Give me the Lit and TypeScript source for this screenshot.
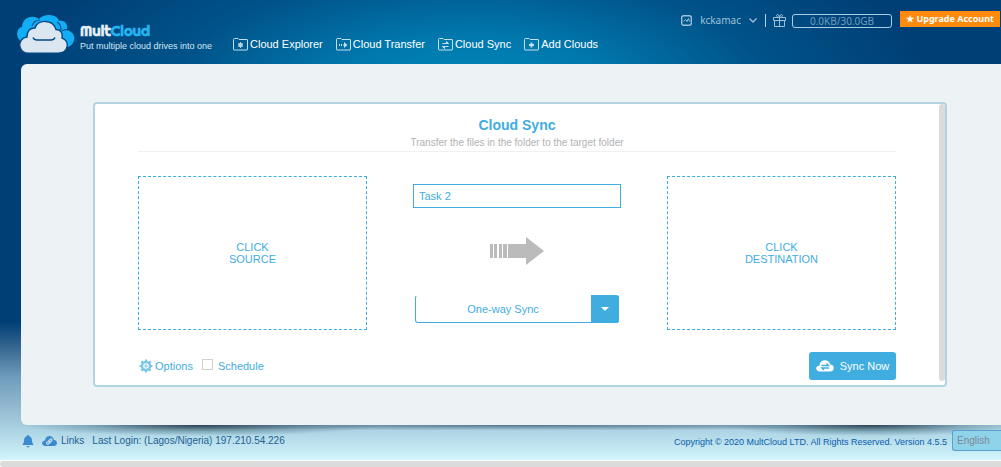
import { LitElement, html, css, svg } from "lit";
import { customElement, property, state } from "lit/decorators.js";

const glyphs: Record<string, unknown> = {
  explorer: svg`<circle cx="7.500" cy="7" r="1.800"/><path stroke-width=".8" d="M7.500 4v6M5 5.500l5 3M5 8.500l5-3"/>`,
  transfer: svg`<path d="M3.500 6v2M5.500 6v2M7 7h3"/><path stroke="none" d="M8 4 11.500 7 8 10z" fill="currentColor"/>`,
  sync: svg`<path d="M4.500 5.500h6M4.500 8.500h6"/><path d="M8.500 3.500 10.500 5.500H8.500zM6.500 10.500 4.500 8.500h2z" fill="currentColor"/>`,
  add: svg`<path d="M7.500 4.500v5M5 7h5" stroke-width="1.800"/>`,
};

@customElement("folder-link")
class FolderLink extends LitElement {
  @property() glyph = "add";
  @property() label = "";
  static styles = css`
    a { display: flex; align-items: center; gap: 2px; color: #fff; text-decoration: none; font-size: 11px; line-height: 14px; white-space: nowrap; }
    svg { width: 15px; height: 13px; color: #c4dfee; }
  `;
  render() {
    return html`<a href="#"><svg viewBox="0 0 15 13" fill="none" stroke="currentColor" stroke-width="1" aria-hidden="true">
      <path d="M.5 11.500V1.500Q.5.5 1.500.5H5L6 1.500h8q.5 0 .5.5v9.500q0 .5-.5.500H1q-.5 0-.5-.5z"/>${glyphs[this.glyph]}</svg>${this.label}</a>`;
  }
}

@customElement("app-root")
class AppRoot extends LitElement {
  @state() private task = "Task 2";

  static styles = css`
    :host { display: block; font-family: "Liberation Sans", Arial, sans-serif; font-size: 11px; color: #3faddf; }
    * { box-sizing: border-box; }
    .page { min-height: 100vh; display: flex; flex-direction: column; overflow: hidden;
      background: radial-gradient(ellipse 460px 180px at 47% 90px, #0088bb 0%, #0078ad 30%, rgba(0, 96, 150, .6) 65%, rgba(0, 63, 118, 0) 100%),
        linear-gradient(180deg, #003f76 0, #003f76 322px, #35668f 347px, #6f9cbd 377px, #92b9d0 407px, #a8d0e0 427px, #d2f5fd 460px); }
    header { height: 64px; display: flex; align-items: flex-start; }
    .brand { display: flex; gap: 4px; padding: 15px 0 0 16px; width: 233px; color: #d5e8f4; text-decoration: none; font-size: 9px; white-space: nowrap; }
    .brand svg { width: 60px; height: 39px; flex: none; }
    .name { font: 700 15px/16px "Righteous", "Lato", sans-serif; color: #e4eef5; padding-top: 8px; }
    .name b { color: #23b4f2; }
    .tag { line-height: 14px; }
    nav { display: flex; gap: 13px; padding-top: 37px; flex: 1; }
    .account { display: flex; align-items: flex-start; color: #9fc0d6; font: 10px/14px "Noto Sans", sans-serif; padding-right: 1px; }
    .user { display: flex; align-items: center; gap: 8px; margin: 12px 8px 0 0; height: 16px; padding: 0; border: 0; background: none; color: inherit; font: inherit; }
    .bar { width: 1px; height: 13px; background: #b9d3e3; margin: 14px 7px 0 0; }
    .gift { margin: 14px 6px 0 0; }
    .quota { width: 100px; height: 14px; margin: 14px 8px 0 0; border: 1px solid #a9cfe4; border-radius: 3px; text-align: center; line-height: 12px; color: #6d9dbd; }
    .upgrade { width: 100px; height: 16px; margin-top: 11px; border: 0; padding: 0; background: #ff8a0c; color: #fff; font: 700 9px/16px "Noto Sans", sans-serif; white-space: nowrap; }
    main { margin-left: 21px; border-radius: 6px 0 0 6px; background: #edf2f5; padding: 38px 54px 38px 72px; }
    .card { height: 285px; display: flex; border: 2px solid #b2d4e1; border-radius: 4px; background: #fff; }
    form { flex: 1; padding: 0 43px; margin: 0; min-width: 0; }
    .track { width: 6px; height: 277px; border-radius: 3px; background: #dbdbdb; }
    .title { border-bottom: 1px solid #f0f0f0; height: 48px; padding-top: 11px; text-align: center; color: #b2b2b2; font-size: 10px; line-height: 14px; }
    h1 { margin: 0; font-size: 14px; line-height: 21px; color: #3faddf; }
    .work { display: grid; grid-template-columns: 229px 1fr 229px; padding-top: 24px; }
    .drop { height: 154px; border: 1px dashed #3faddf; background: none; color: inherit; font: 11px/12px "Liberation Sans", Arial, sans-serif; padding: 0; }
    .middle { display: flex; flex-direction: column; align-items: center; padding-top: 8px; }
    .task { width: 208px; height: 24px; border: 1px solid #3faddf; border-radius: 0; color: #3faddf; font: 11px/14px "Liberation Sans", Arial, sans-serif; padding: 0 5px; background: #fff; outline: 0; }
    .arrow { margin: 27px 0 30px; }
    .mode { display: grid; width: 204px; height: 28px; }
    .mode select { grid-area: 1 / 1; appearance: none; border: 1px solid #3faddf; border-top-color: transparent; border-radius: 3px; background: #fff; color: #3faddf; font: 11px/14px "Liberation Sans", Arial, sans-serif; padding: 0 28px 0 0; text-align: center; text-align-last: center; }
    .mode span { grid-area: 1 / 1; justify-self: end; display: grid; place-items: center; width: 28px; background: #3faddf; border-radius: 0 3px 3px 0; pointer-events: none; }
    .foot { display: flex; align-items: center; padding-top: 22px; }
    .options { display: flex; align-items: center; gap: 2px; padding: 0 0 0 1px; border: 0; background: none; color: inherit; font: inherit; }
    .schedule { display: flex; align-items: center; gap: 5px; margin-left: 9px; flex: 1; }
    .schedule input { appearance: none; width: 11px; height: 11px; margin: 0 0 3px; border: 1px solid #d2d2d2; background: #fff; }
    .go { display: flex; align-items: center; justify-content: center; gap: 6px; width: 87px; height: 28px; padding: 0; border: 0; border-radius: 3px; background: #3faddf; color: #fff; font: 11px/14px "Liberation Sans", Arial, sans-serif; white-space: nowrap; }
    .under { display: grid; }
    .under > * { grid-area: 1 / 1; }
    .shadow { height: 11px; background:
      radial-gradient(ellipse 18% 100% at 20% 0, rgba(20, 40, 55, .8), rgba(50, 90, 110, .35) 60%, rgba(80, 120, 140, 0)),
      radial-gradient(ellipse 15% 100% at 87% 0, rgba(20, 40, 55, .8), rgba(50, 90, 110, .35) 60%, rgba(80, 120, 140, 0)),
      radial-gradient(ellipse 46% 50% at 52% 0, rgba(30, 60, 80, .6), rgba(80, 120, 140, 0)); }
    footer { height: 35px; display: flex; align-items: flex-start; font-size: 10px; line-height: 14px; color: #1f5f94; white-space: nowrap; }
    .info { display: flex; gap: 8px; align-items: center; padding: 9px 0 0 22px; flex: 1; }
    .info a { display: flex; gap: 4px; align-items: center; color: inherit; text-decoration: none; }
    .copy { font-size: 9px; color: #0a5cad; padding: 10px 5px 0 0; }
    .lang { appearance: none; width: 49px; height: 21px; margin-top: 5px; border: 1px solid #5a9fd0; border-right: 0; border-radius: 3px 0 0 3px; background: #8fd3ea; color: #7c8794; font: 10px/14px "Liberation Sans", Arial, sans-serif; padding: 0 0 0 4px; }
    .hbar { height: 7px; background: #fff; padding-top: 1px; }
    .hbar div { height: 6px; background: #dbdbdb; border-radius: 3px 0 0 3px; }
  `;

  render() {
    return html`<div class="page">
      <header>
        <a class="brand" href="#">
          <svg viewBox="0 0 60 39" aria-hidden="true">
            <path fill="#12aef5" d="M6 27C-1 24 0 13 6 12 6 3 16-1 23 4c5-6 18-5 20 2 6-1 9 3 8 9 7 2 9 8 6 13-3 5-8 5-11 2H8z"/>
            <path fill="none" stroke="#00538b" stroke-width="1.200" d="M16 11q2-6 8-6M41 7q4 2 4 8M46 16q3-2 6-1"/>
            <path fill="#dce6f0" stroke="#004984" stroke-width="1.400" d="M13 38.300C1 38.300 1 23 11 22c0-7 4-9 8-9C22 4 37 4 40 14.500c5 0 7 4 6 8.500 8 3 7 15-4 15.300z"/>
            <path fill="none" stroke="#004984" stroke-width="1.400" d="M17 22.500q1 2.500 4 2.500h14q3 0 4-2.500"/>
          </svg>
          <div><div class="name">Mult<b>Cloud</b></div><div class="tag">Put multiple cloud drives into one</div></div>
        </a>
        <nav aria-label="Main">
          <folder-link glyph="explorer" label="Cloud Explorer"></folder-link>
          <folder-link glyph="transfer" label="Cloud Transfer"></folder-link>
          <folder-link glyph="sync" label="Cloud Sync"></folder-link>
          <folder-link glyph="add" label="Add Clouds"></folder-link>
        </nav>
        <div class="account">
          <button class="user">
            <svg width="11" height="11" viewBox="0 0 11 11" fill="none" stroke="currentColor" aria-hidden="true"><rect x=".7" y=".7" width="9.600" height="9.600" rx="2" stroke-width="1.400"/><path d="M2.500 6.500 4.500 4.500l1.500 2 1.500-3 1 3"/></svg>
            kckamac
            <svg width="8" height="5" viewBox="0 0 8 5" fill="none" stroke="currentColor" stroke-width="1.300" aria-hidden="true"><path d="M.5.5 4 4 7.500.5"/></svg>
          </button>
          <div class="bar"></div>
          <svg class="gift" width="13" height="13" viewBox="0 0 13 13" fill="none" stroke="currentColor" aria-hidden="true"><path d="M.5 3.500h12v3H.5zM1.500 6.500h10v6h-10zM6.500 3.500v9M6.500 3.500C3 3.500 3 .5 4.500.5s2 3 2 3 .5-3 2-3 1.500 3-2 3"/></svg>
          <div class="quota">0.0KB/30.0GB</div>
          <button class="upgrade">★ Upgrade Account</button>
        </div>
      </header>
      <main>
        <div class="card">
          <form @submit=${(e: Event) => e.preventDefault()}>
            <div class="title"><h1>Cloud Sync</h1>Transfer the files in the folder to the target folder</div>
            <div class="work">
              <button type="button" class="drop">CLICK<br>SOURCE</button>
              <div class="middle">
                <input class="task" aria-label="Task name" .value=${this.task} @input=${(e: Event) => (this.task = (e.target as HTMLInputElement).value)}>
                <svg class="arrow" width="54" height="30" viewBox="0 0 54 30" fill="#bbb" aria-hidden="true"><path d="M0 9h3v14H0zM4 9h3v14H4zM9 9h3v14H9zM13 9h4v14h-4zM18 9h18V2l18 14-18 14v-7H18z"/></svg>
                <div class="mode">
                  <select aria-label="Sync mode"><option>One-way Sync</option><option>Two-way Sync</option></select>
                  <span><svg width="8" height="4" viewBox="0 0 8 4" fill="#fff" aria-hidden="true"><path d="M0 0h8L4 4z"/></svg></span>
                </div>
              </div>
              <button type="button" class="drop">CLICK<br>DESTINATION</button>
            </div>
            <div class="foot">
              <button type="button" class="options">
                <svg width="14" height="14" viewBox="0 0 14 14" fill="none" stroke="#7cc6e8" aria-hidden="true"><circle cx="7" cy="7" r="4" stroke-width="2.400"/><circle cx="7" cy="7" r="1.200"/><path stroke-width="2.200" d="M7 .5v2M7 11.500v2M.5 7h2M11.500 7h2M2.300 2.300l1.500 1.500M10.200 10.200l1.500 1.500M2.300 11.700l1.500-1.500M10.200 3.800l1.500-1.500"/></svg>Options</button>
              <label class="schedule"><input type="checkbox">Schedule</label>
              <button class="go">
                <svg width="18" height="12" viewBox="0 0 18 12" aria-hidden="true"><path fill="#fff" d="M4 11.500C-1 11.500-1 6 3.500 5.500 4-1 13-1.500 14 4.500c5 0 5 7 0 7z"/><path fill="none" stroke="#3faddf" stroke-width="1.400" d="M5.500 5.500h7l-2-2M13 8H6l2 2"/></svg>Sync Now</button>
            </div>
          </form>
          <div class="track"></div>
        </div>
      </main>
      <div class="under">
        <div class="shadow"></div>
        <footer>
          <div class="info">
            <svg width="12" height="13" viewBox="0 0 12 13" fill="#3b8ad0" aria-hidden="true"><path d="M6 0q1 0 1 1 3 1 3 4.500c0 2.500 1 3.500 1.800 4.500H.2C1 9 2 8 2 5.500 2 2 5 1 5 1q0-1 1-1zM4.500 11h3Q7 12.500 6 12.500T4.500 11z"/></svg>
            <a href="#"><svg width="15" height="10" viewBox="0 0 15 10" aria-hidden="true"><path fill="#3b8ad0" d="M3.500 10C-1 10-1 5 3 4.500 3.500-1 11-1.500 12 4c4 0 4 6 0 6z"/><path fill="none" stroke="#b9dcec" stroke-width="1.200" d="M6 5.500 8.500 3q1-.5 1.500.5t-2 3L6.500 8Q5 8.500 4.500 7.500T6 5.500M6.500 6.800l2-2"/></svg>Links</a>
            <span>Last Login: (Lagos/Nigeria) 197.210.54.226</span>
          </div>
          <div class="copy">Copyright © 2020 MultCloud LTD. All Rights Reserved. Version 4.5.5</div>
          <select class="lang" aria-label="Language"><option>English</option></select>
        </footer>
      </div>
      <div class="hbar"><div></div></div>
    </div>`;
  }
}
